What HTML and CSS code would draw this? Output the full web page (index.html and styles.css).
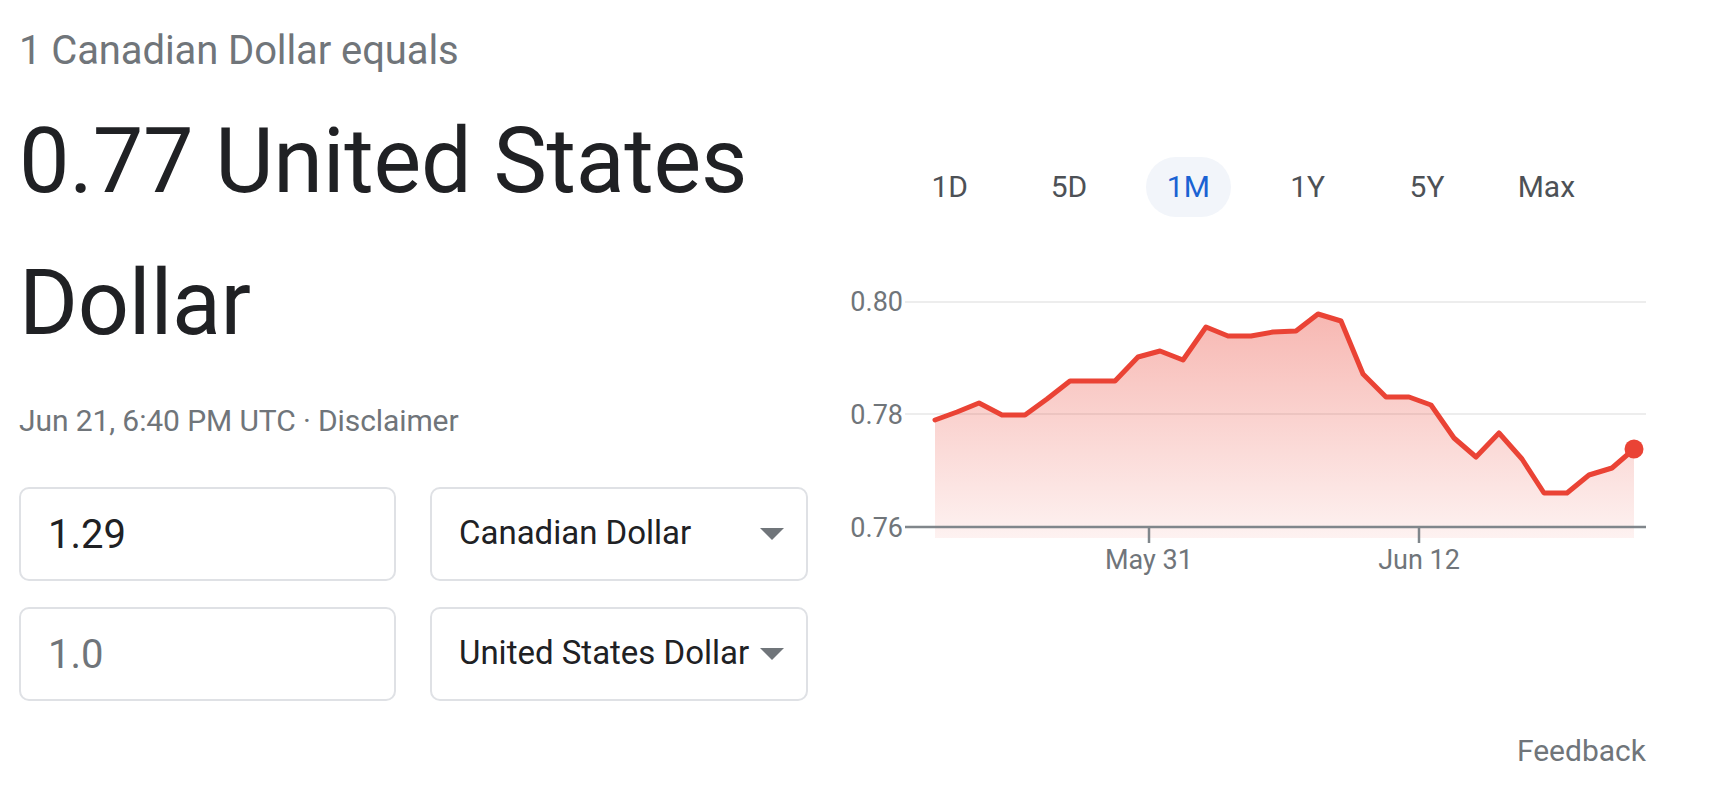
FILE: index.html
```html
<!DOCTYPE html>
<html lang="en">
<head>
<meta charset="utf-8">
<title>Currency converter</title>
<link rel="stylesheet" href="styles.css">
</head>
<body>
<div class="page">
  <section class="left">
    <div class="equals">1 Canadian Dollar equals</div>
    <div class="result">0.77 United States Dollar</div>
    <div class="meta">Jun 21, 6:40 PM UTC · <span class="disclaimer">Disclaimer</span></div>
    <div class="converter">
      <div class="field amount">1.29</div>
      <div class="field select"><span class="select-label">Canadian Dollar</span><span class="caret"></span></div>
      <div class="field amount muted">1.0</div>
      <div class="field select"><span class="select-label">United States Dollar</span><span class="caret"></span></div>
    </div>
  </section>
  <section class="right">
    <div class="tabs">
      <div class="tab"><span class="tab-label">1D</span></div>
      <div class="tab"><span class="tab-label">5D</span></div>
      <div class="tab"><span class="tab-label active">1M</span></div>
      <div class="tab"><span class="tab-label">1Y</span></div>
      <div class="tab"><span class="tab-label">5Y</span></div>
      <div class="tab"><span class="tab-label">Max</span></div>
    </div>
    <svg class="chart" width="834" height="300" viewBox="0 0 834 300" xmlns="http://www.w3.org/2000/svg">
      <defs>
        <linearGradient id="fillGrad" x1="0" y1="34" x2="0" y2="258" gradientUnits="userSpaceOnUse">
          <stop offset="0" stop-color="#ea4335" stop-opacity="0.38"/>
          <stop offset="1" stop-color="#ea4335" stop-opacity="0.07"/>
        </linearGradient>
      </defs>
      <g transform="translate(40 0)">
        <line x1="53" y1="22" x2="794" y2="22" stroke="#ededed" stroke-width="2"/>
        <line x1="53" y1="134" x2="794" y2="134" stroke="#ededed" stroke-width="2"/>
        <polygon fill="url(#fillGrad)" points="83,258 83,140 105,132 127,123 150,135 173,135 195,119 218,101 240,101 263,101 286,77 308,71 331,80 354,47 376,56 399,56 421,52 444,51 466,34 489,41 511,94 534,117 557,117 579,125 602,158 624,177 647,153 670,179 692,213 715,213 737,195 760,188 782,169 782,258"/>
        <line x1="53" y1="247" x2="794" y2="247" stroke="#80868b" stroke-width="2.5"/>
        <line x1="297" y1="247" x2="297" y2="263" stroke="#80868b" stroke-width="2.5"/>
        <line x1="567" y1="247" x2="567" y2="263" stroke="#80868b" stroke-width="2.5"/>
        <polyline fill="none" stroke="#ea4335" stroke-width="5" stroke-linejoin="round" stroke-linecap="round" points="83,140 105,132 127,123 150,135 173,135 195,119 218,101 240,101 263,101 286,77 308,71 331,80 354,47 376,56 399,56 421,52 444,51 466,34 489,41 511,94 534,117 557,117 579,125 602,158 624,177 647,153 670,179 692,213 715,213 737,195 760,188 782,169"/>
        <circle cx="782" cy="169" r="9.5" fill="#ea4335"/>
        <text class="axis-label" x="51" y="31" text-anchor="end">0.80</text>
        <text class="axis-label" x="51" y="143.5" text-anchor="end">0.78</text>
        <text class="axis-label" x="51" y="256.5" text-anchor="end">0.76</text>
        <text class="axis-label" x="297" y="289" text-anchor="middle">May 31</text>
        <text class="axis-label" x="567" y="289" text-anchor="middle">Jun 12</text>
      </g>
    </svg>
    <div class="feedback">Feedback</div>
  </section>
</div>
</body>
</html>
```

FILE: styles.css
```css
html, body {
  margin: 0;
  padding: 0;
  background: #ffffff;
}

body {
  font-family: Roboto, "Liberation Sans", Arial, sans-serif;
  color: #202124;
}

.page {
  display: flex;
  align-items: flex-start;
  gap: 41px;
  padding: 26px 0 0 19px;
}

.left {
  width: 792px;
  flex: none;
}

.equals {
  font-size: 40px;
  line-height: 50px;
  color: #70757a;
  letter-spacing: -0.1px;
}

.result {
  margin-top: 15px;
  font-size: 90px;
  line-height: 142px;
  letter-spacing: -0.3px;
  color: #202124;
}

.meta {
  margin-top: 26px;
  font-size: 30px;
  line-height: 40px;
  letter-spacing: -0.1px;
  color: #70757a;
}

.converter {
  margin-top: 46px;
  display: grid;
  grid-template-columns: 377px 378px;
  grid-auto-rows: 94px;
  column-gap: 34px;
  row-gap: 26px;
}

.field {
  box-sizing: border-box;
  border: 2px solid #dfe1e5;
  border-radius: 10px;
  display: flex;
  align-items: center;
}

.amount {
  padding: 0 20px 0 27px;
  font-size: 40px;
  color: #202124;
}

.amount.muted {
  color: #70757a;
}

.select {
  padding: 0 22px 4px 27px;
  font-size: 33px;
  color: #202124;
}

.select-label {
  white-space: nowrap;
}

.caret {
  margin-left: auto;
  margin-top: 4px;
  width: 0;
  height: 0;
  border-left: 12.5px solid transparent;
  border-right: 12.5px solid transparent;
  border-top: 12px solid #70757a;
}

.right {
  width: 794px;
  flex: none;
  display: flex;
  flex-direction: column;
}

.tabs {
  margin-top: 131px;
  margin-left: 38px;
  width: 716px;
  display: grid;
  grid-template-columns: repeat(6, 1fr);
  height: 60px;
}

.tab {
  display: flex;
  justify-content: center;
}

.tab-label {
  display: inline-block;
  width: 85px;
  height: 60px;
  line-height: 60px;
  text-align: center;
  font-size: 30px;
  color: #4d5156;
  border-radius: 30px;
}

.tab-label.active {
  background: #f2f5fa;
  color: #1a62d3;
}

.chart {
  display: block;
  margin-top: 63px;
  margin-left: -40px;
}

.axis-label {
  font-family: Roboto, "Liberation Sans", Arial, sans-serif;
  font-size: 27px;
  fill: #70757a;
}

.feedback {
  margin-top: 151px;
  text-align: right;
  font-size: 30px;
  line-height: 40px;
  color: #70757a;
}
```
